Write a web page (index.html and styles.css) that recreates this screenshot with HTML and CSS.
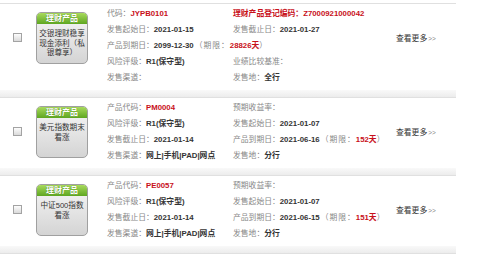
FILE: index.html
```html
<!DOCTYPE html>
<html lang="zh-CN">
<head>
    <meta charset="UTF-8">
    <title>理财产品列表</title>
    <link rel="stylesheet" href="styles.css">
</head>
<body>

    <div class="list">

        <div class="item">
            <div class="check"><input type="checkbox" /></div>
            <div class="badge">
                <div class="badge-head">理财产品</div>
                <div class="badge-body">交银理财稳享现金添利（私银尊享）</div>
            </div>
            <div class="info">
                <div><span class="label">代码：</span><span class="red">JYPB0101</span></div>
                <div class="red">理财产品登记编码：Z7000921000042</div>
                <div><span class="label">发售起始日：</span><span class="val">2021-01-15</span></div>
                <div><span class="label">发售截止日：</span><span class="val">2021-01-27</span></div>
                <div class="wide"><span class="label">产品到期日：</span><span class="val">2099-12-30</span><span class="label term">（期限：</span><span class="red">28826天</span><span class="label">）</span></div>
                <div><span class="label">风险评级：</span><span class="val">R1(保守型)</span></div>
                <div><span class="label">业绩比较基准：</span></div>
                <div><span class="label">发售渠道：</span></div>
                <div><span class="label">发售地：</span><span class="val">全行</span></div>
            </div>
            <a class="more" href="#">查看更多<span>&gt;&gt;</span></a>
        </div>

        <div class="item">
            <div class="check"><input type="checkbox" /></div>
            <div class="badge">
                <div class="badge-head">理财产品</div>
                <div class="badge-body">美元指数期末看涨</div>
            </div>
            <div class="info">
                <div><span class="label">产品代码：</span><span class="red">PM0004</span></div>
                <div><span class="label">预期收益率：</span></div>
                <div><span class="label">风险评级：</span><span class="val">R1(保守型)</span></div>
                <div><span class="label">发售起始日：</span><span class="val">2021-01-07</span></div>
                <div><span class="label">发售截止日：</span><span class="val">2021-01-14</span></div>
                <div><span class="label">产品到期日：</span><span class="val">2021-06-16</span><span class="label term">（期限：</span><span class="red">152天</span><span class="label">）</span></div>
                <div><span class="label">发售渠道：</span><span class="val">网上|手机|PAD|网点</span></div>
                <div><span class="label">发售地：</span><span class="val">分行</span></div>
            </div>
            <a class="more" href="#">查看更多<span>&gt;&gt;</span></a>
        </div>

        <div class="item">
            <div class="check"><input type="checkbox" /></div>
            <div class="badge">
                <div class="badge-head">理财产品</div>
                <div class="badge-body">中证500指数看涨</div>
            </div>
            <div class="info">
                <div><span class="label">产品代码：</span><span class="red">PE0057</span></div>
                <div><span class="label">预期收益率：</span></div>
                <div><span class="label">风险评级：</span><span class="val">R1(保守型)</span></div>
                <div><span class="label">发售起始日：</span><span class="val">2021-01-07</span></div>
                <div><span class="label">发售截止日：</span><span class="val">2021-01-14</span></div>
                <div><span class="label">产品到期日：</span><span class="val">2021-06-15</span><span class="label term">（期限：</span><span class="red">151天</span><span class="label">）</span></div>
                <div><span class="label">发售渠道：</span><span class="val">网上|手机|PAD|网点</span></div>
                <div><span class="label">发售地：</span><span class="val">分行</span></div>
            </div>
            <a class="more" href="#">查看更多<span>&gt;&gt;</span></a>
        </div>

    </div>

</body>
</html>
```

FILE: styles.css
```css
body {
    margin: 0;
    padding: 0;
    background: #fff;
    font-family: "Liberation Sans", "Noto Sans CJK SC", sans-serif;
    font-size: 7.8px;
    color: #333;
}

.list {
    width: 456px;
    padding-top: 3px;
    border-bottom: 1px solid #e0e0e0;
}

.item {
    display: flex;
    align-items: flex-start;
    border-top: 1px solid #e0e0e0;
    padding-bottom: 7px;
    background: linear-gradient(to top, #ececec 0, #f9f9f9 7px, #fff 7px);
}

.check {
    margin: 29px 14px 0 13px;
    line-height: 0;
}

.check input {
    -webkit-appearance: none;
    appearance: none;
    width: 9px;
    height: 9px;
    margin: 0;
    border: 1px solid #a3a3a3;
    background: linear-gradient(#fdfdfd, #dadada);
}

.badge {
    width: 50px;
    height: 50px;
    margin-top: 8px;
    border: 1px solid #a0a0a0;
    border-radius: 5px;
    overflow: hidden;
    background: linear-gradient(#f6f6f6, #d4d4d4);
}

.badge-head {
    height: 11px;
    line-height: 11px;
    text-align: center;
    font-size: 8px;
    font-weight: bold;
    color: #fff;
    background: linear-gradient(#a8da5c, #5ea621);
    text-shadow: 0 0 1px #3f7a10;
}

.badge-body {
    padding: 5px 2px 0;
    line-height: 9.5px;
    font-size: 7.6px;
    text-align: center;
    color: #333;
}

.info {
    width: 289px;
    margin-left: 19px;
    padding: 2px 0 4px;
    display: grid;
    grid-template-columns: 126px 1fr;
    line-height: 16px;
    white-space: nowrap;
}

.info .wide {
    grid-column: 1 / -1;
}

.label {
    color: #888;
}

.term {
    margin-left: 1px;
    letter-spacing: 1px;
}

.val {
    color: #333;
    font-weight: bold;
}

.red {
    color: #c8101a;
    font-weight: bold;
}

.more {
    margin-top: 27px;
    line-height: 16px;
    color: #333;
    text-decoration: none;
    white-space: nowrap;
}

.more span {
    margin-left: 1px;
    font-size: 6.5px;
    color: #888;
}
```
